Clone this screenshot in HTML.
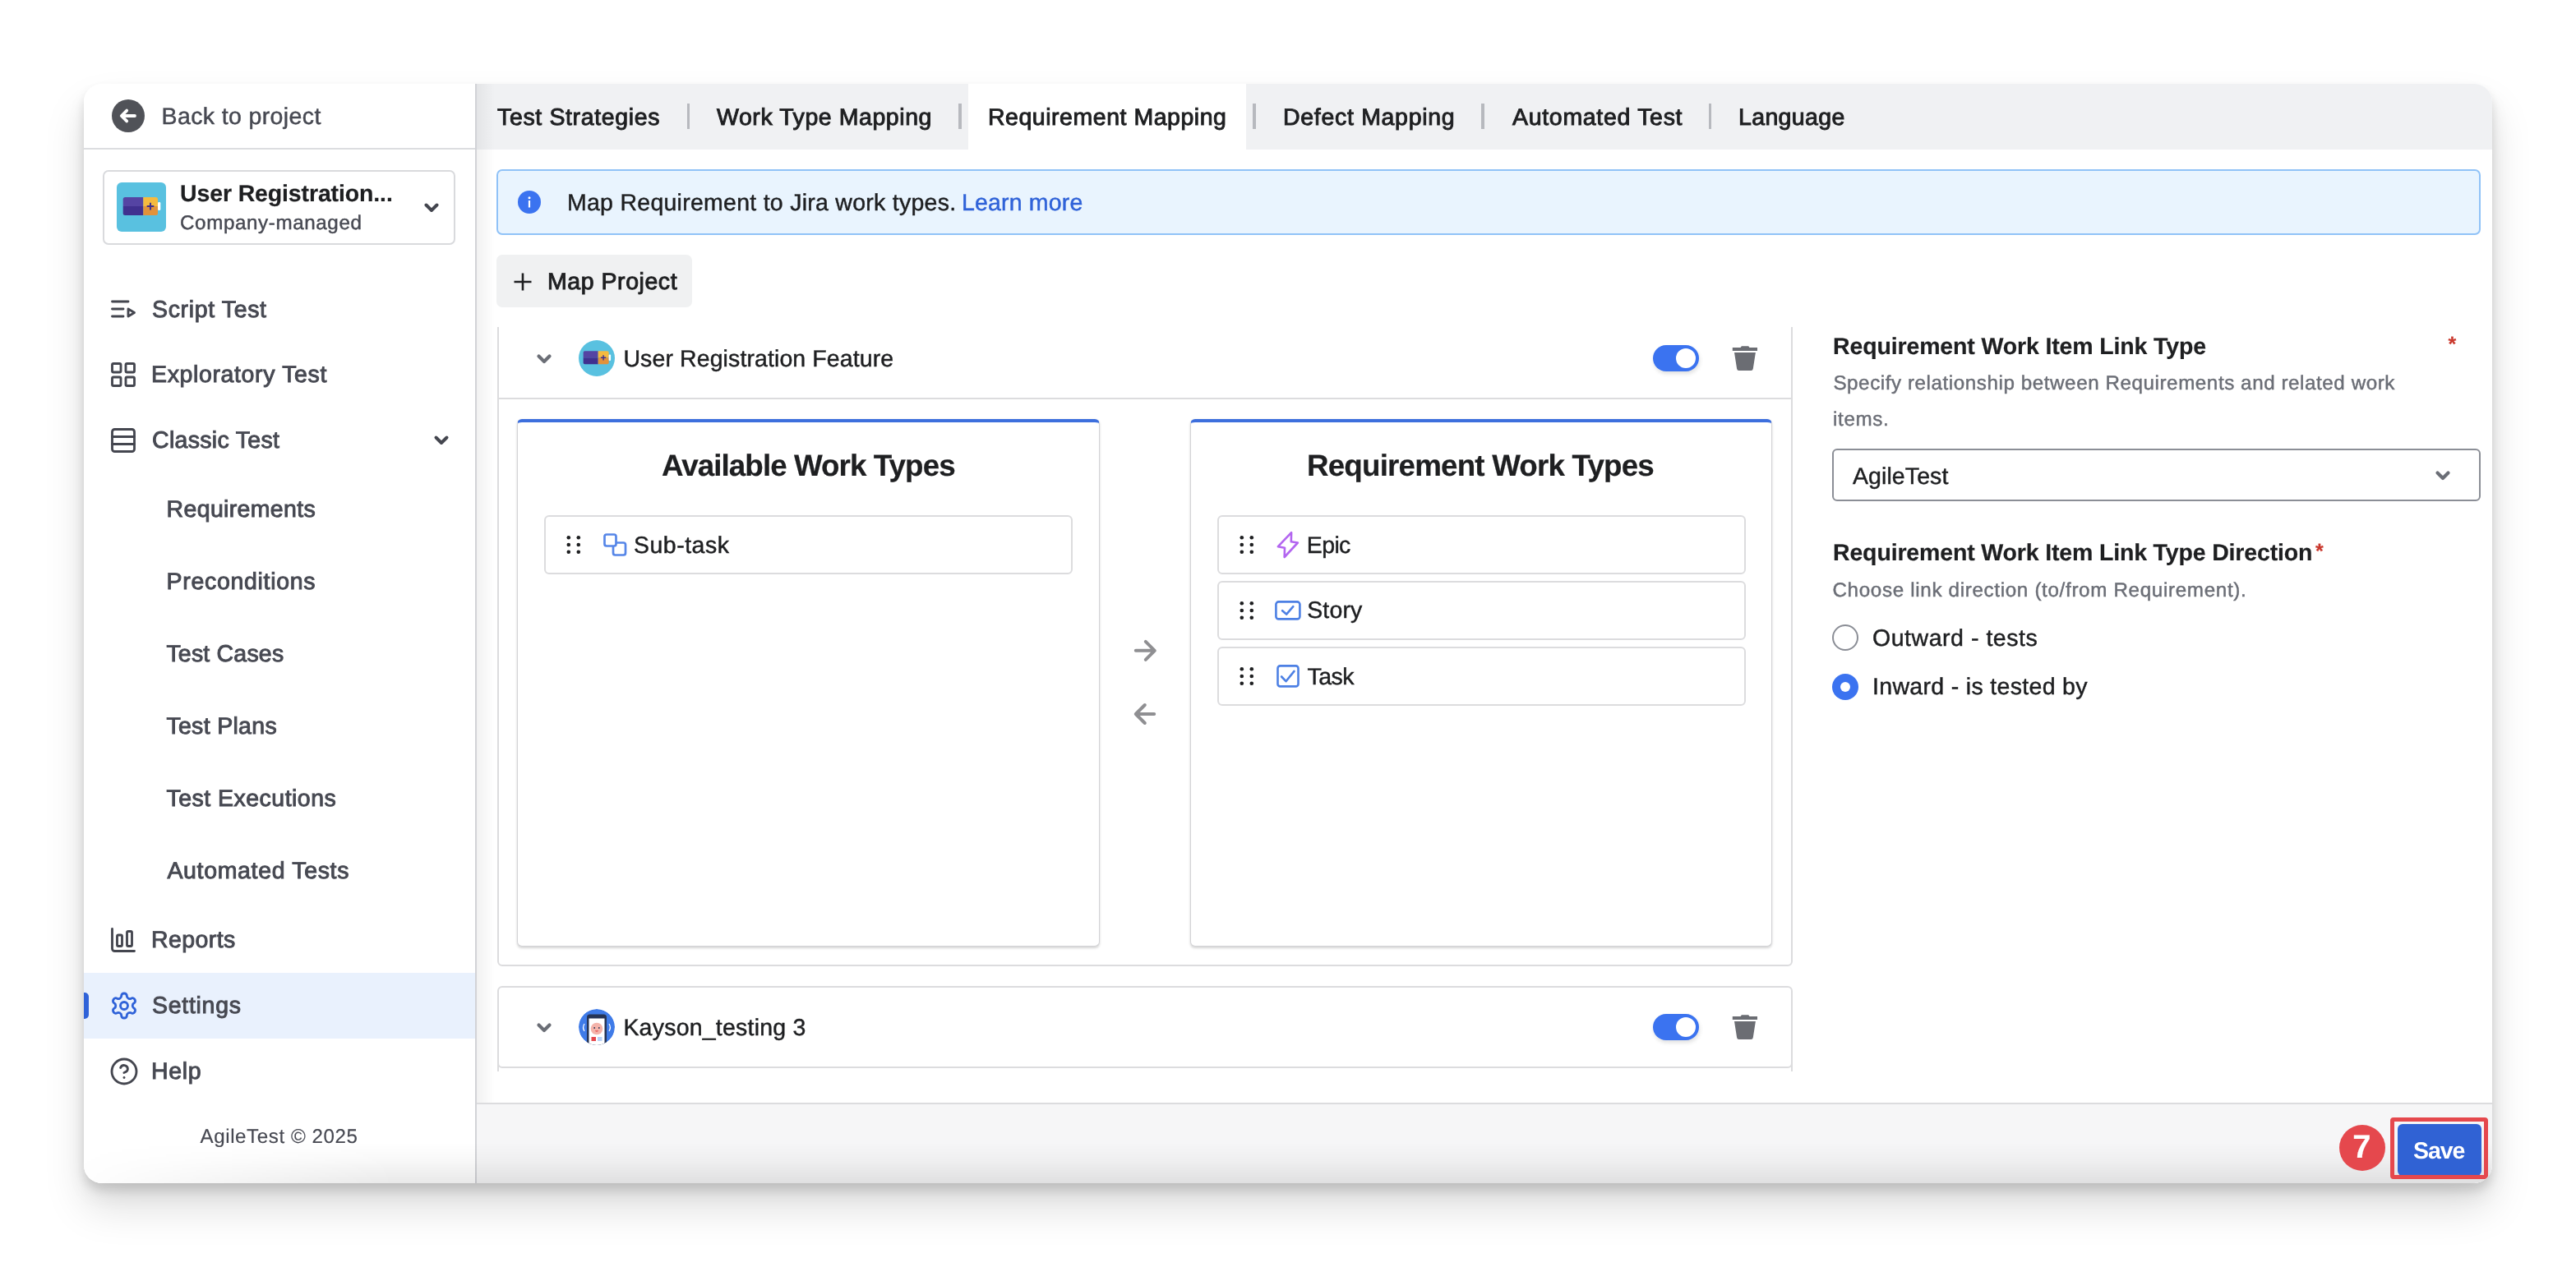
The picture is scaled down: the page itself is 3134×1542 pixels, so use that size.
<!DOCTYPE html>
<html lang="en">
<head>
<meta charset="utf-8">
<title>AgileTest Settings - Requirement Mapping</title>
<style>
*{box-sizing:border-box;margin:0;padding:0}
html,body{width:3134px;height:1542px;overflow:hidden;background:#fff}
body{font-family:"Liberation Sans",Arial,sans-serif;position:relative}
#shadow{position:absolute;left:102px;top:102px;width:2930px;height:1338px;border-radius:22px;background:#fff;
  box-shadow:0 8px 12px rgba(0,0,0,.11),0 30px 50px rgba(0,0,0,.13),0 14px 24px rgba(0,0,0,.06)}
#clip{position:absolute;left:102px;top:102px;width:2930px;height:1338px;border-radius:22px;overflow:hidden;background:#fff}
#in{position:absolute;left:-102px;top:-102px;width:3134px;height:1542px;will-change:transform}
#in div,#in svg{position:absolute}
.t{line-height:1;white-space:nowrap;text-rendering:geometricPrecision}
.bx{border:2px solid #dcdcde;border-radius:6px;background:#fff}
</style>
</head>
<body>
<div id="shadow"></div>
<div id="clip"><div id="in">
<!-- ===== sidebar ===== -->
<div style="left:102px;top:102px;width:478px;height:1338px;background:#fff;border-right:2px solid #d2d3d7"></div>
<div style="left:102px;top:179.5px;width:476px;height:2px;background:#dcdde0"></div>
<!-- back button -->
<svg style="left:136px;top:121px" width="40" height="40" viewBox="0 0 40 40"><circle cx="20" cy="20" r="20" fill="#505258"/><path d="M28 20H12.5M18.2 13.6L11.8 20L18.2 26.400" fill="none" stroke="#fff" stroke-width="3.800" stroke-linecap="round" stroke-linejoin="round"/></svg>
<!-- project box -->
<div class="bx" style="left:124.5px;top:206.5px;width:429px;height:91px;border-color:#d9dadd;border-radius:7px"></div>
<svg style="left:142px;top:222px" width="60" height="60" viewBox="0 0 60 60"><rect width="60" height="60" rx="6" fill="#59c1e0"/><path d="M10.2 18h22.100v11H7.700v-8.500a2.500 2.500 0 0 1 2.500-2.500z" fill="#5544a3"/><path d="M7.700 29h24.600v11H10.200a2.500 2.500 0 0 1-2.500-2.500z" fill="#40308f"/><path d="M32.300 18h15.200a2.500 2.500 0 0 1 2.500 2.500v8.500H32.300z" fill="#f5ba3f"/><path d="M32.300 29h17.700v8.500a2.500 2.500 0 0 1-2.500 2.500H32.300z" fill="#e2923a"/><rect x="50" y="23.900" width="3.300" height="10.200" rx="1.300" fill="#fff"/><path d="M41 24.800v8.600M36.700 29.100h8.600" stroke="#40308f" stroke-width="2" fill="none"/></svg>
<svg style="left:515px;top:244.5px" width="20" height="16" viewBox="0 0 20 16"><path d="M3.5 4.5L10 11L16.5 4.5" fill="none" stroke="#44464f" stroke-width="4" stroke-linecap="round" stroke-linejoin="round"/></svg>
<!-- nav icons -->
<svg style="left:132px;top:358px" width="36" height="36" viewBox="0 0 24 24" fill="none" stroke="#44464f" stroke-width="1.9" stroke-linecap="round" stroke-linejoin="round"><path d="M12 12H3"/><path d="M16 6H3"/><path d="M12 18H3"/><path d="m16 12 5 3-5 3v-6Z"/></svg>
<svg style="left:132px;top:438px" width="36" height="36" viewBox="0 0 24 24" fill="none" stroke="#44464f" stroke-width="1.9" stroke-linecap="round" stroke-linejoin="round"><rect width="7" height="7" x="3" y="3" rx="1"/><rect width="7" height="7" x="14" y="3" rx="1"/><rect width="7" height="7" x="14" y="14" rx="1"/><rect width="7" height="7" x="3" y="14" rx="1"/></svg>
<svg style="left:132px;top:518px" width="36" height="36" viewBox="0 0 24 24" fill="none" stroke="#44464f" stroke-width="1.9" stroke-linecap="round" stroke-linejoin="round"><rect width="18" height="18" x="3" y="3" rx="2"/><path d="M21 9H3"/><path d="M21 15H3"/></svg>
<svg style="left:527px;top:528px" width="20" height="16" viewBox="0 0 20 16"><path d="M3.5 4.5L10 11L16.5 4.5" fill="none" stroke="#44464f" stroke-width="4" stroke-linecap="round" stroke-linejoin="round"/></svg>
<svg style="left:132px;top:1126px" width="36" height="36" viewBox="0 0 24 24" fill="none" stroke="#44464f" stroke-width="1.9" stroke-linecap="round" stroke-linejoin="round"><path d="M3 3v16a2 2 0 0 0 2 2h16"/><rect x="15" y="5" width="4" height="12" rx="1"/><rect x="7" y="8" width="4" height="9" rx="1"/></svg>
<!-- settings active row -->
<div style="left:102px;top:1184px;width:476px;height:79.5px;background:#e9f1fd"></div>
<div style="left:102px;top:1208px;width:5.5px;height:31.5px;background:#2f62d8;border-radius:0 5px 5px 0"></div>
<svg style="left:132.5px;top:1206px" width="36" height="36" viewBox="0 0 24 24" fill="none" stroke="#2f62d8" stroke-width="1.9" stroke-linecap="round" stroke-linejoin="round"><path d="M12.22 2h-.44a2 2 0 0 0-2 2v.18a2 2 0 0 1-1 1.73l-.43.25a2 2 0 0 1-2 0l-.15-.08a2 2 0 0 0-2.73.73l-.22.38a2 2 0 0 0 .73 2.73l.15.1a2 2 0 0 1 1 1.72v.51a2 2 0 0 1-1 1.74l-.15.09a2 2 0 0 0-.73 2.73l.22.38a2 2 0 0 0 2.73.73l.15-.08a2 2 0 0 1 2 0l.43.25a2 2 0 0 1 1 1.73V20a2 2 0 0 0 2 2h.44a2 2 0 0 0 2-2v-.18a2 2 0 0 1 1-1.73l.43-.25a2 2 0 0 1 2 0l.15.08a2 2 0 0 0 2.73-.73l.22-.39a2 2 0 0 0-.73-2.73l-.15-.08a2 2 0 0 1-1-1.74v-.5a2 2 0 0 1 1-1.74l.15-.09a2 2 0 0 0 .73-2.73l-.22-.38a2 2 0 0 0-2.73-.73l-.15.08a2 2 0 0 1-2 0l-.43-.25a2 2 0 0 1-1-1.73V4a2 2 0 0 0-2-2z"/><circle cx="12" cy="12" r="3"/></svg>
<svg style="left:132.5px;top:1286px" width="36" height="36" viewBox="0 0 24 24" fill="none" stroke="#44464f" stroke-width="1.9" stroke-linecap="round" stroke-linejoin="round"><circle cx="12" cy="12" r="10"/><path d="M9.09 9a3 3 0 0 1 5.83 1c0 2-3 3-3 3"/><path d="M12 17h.01"/></svg>
<!-- ===== tab bar ===== -->
<div style="left:580px;top:102px;width:2452px;height:80px;background:#f0f1f3"></div>
<div style="left:1178px;top:102px;width:338px;height:80px;background:#fff"></div>
<div style="left:835.5px;top:126px;width:3.5px;height:31px;background:#b7b9be"></div>
<div style="left:1166.3px;top:126px;width:3.5px;height:31px;background:#b7b9be"></div>
<div style="left:1524.2px;top:126px;width:3.5px;height:31px;background:#b7b9be"></div>
<div style="left:1802px;top:126px;width:3.5px;height:31px;background:#b7b9be"></div>
<div style="left:2078.5px;top:126px;width:3.5px;height:31px;background:#b7b9be"></div>
<!-- sidebar shadow on content -->
<div style="left:580px;top:102px;width:22px;height:1338px;background:linear-gradient(90deg,rgba(0,0,0,.05),rgba(0,0,0,0))"></div>
<!-- banner -->
<div style="left:604px;top:206px;width:2414px;height:80px;background:#e9f4fe;border:2px solid #90c2f7;border-radius:7px"></div>
<svg style="left:630px;top:232px" width="28" height="28" viewBox="0 0 28 28"><circle cx="14" cy="14" r="14" fill="#3b73f0"/><rect x="12.9" y="12" width="2.2" height="8.5" fill="#fff"/><circle cx="14" cy="8.7" r="1.5" fill="#fff"/></svg>
<!-- map project -->
<div style="left:604px;top:310px;width:238px;height:64px;background:#f0f1f2;border-radius:7px"></div>
<svg style="left:624px;top:330.5px" width="24" height="24" viewBox="0 0 24 24"><path d="M12 1.5v21M1.5 12h21" stroke="#1e1f21" stroke-width="2.6" fill="none"/></svg>
<!-- ===== panels (scroll clip) ===== -->
<div style="left:603px;top:398px;width:1579px;height:906px;overflow:hidden"><div style="left:-603px;top:-398px;width:3134px;height:1542px">
<div class="bx" style="left:604.5px;top:380px;width:1576.5px;height:796.3px"></div>
<div style="left:606px;top:484px;width:1573px;height:2px;background:#dcdcde"></div>
<div class="bx" style="left:604.5px;top:1200.3px;width:1576.5px;height:99.7px"></div>
<div style="left:604.5px;top:1290px;width:2px;height:20px;background:#dcdcde"></div>
<div style="left:2179px;top:1290px;width:2px;height:20px;background:#dcdcde"></div>
<!-- cards -->
<div class="bx card" style="left:628.5px;top:510px;width:709.5px;height:641.7px"></div>
<div class="bx card" style="left:1447.5px;top:510px;width:708.5px;height:641.7px"></div>
<!-- items -->
<div class="bx" style="left:662px;top:627px;width:643px;height:71.5px"></div>
<div class="bx" style="left:1481px;top:627px;width:642.5px;height:71.5px"></div>
<div class="bx" style="left:1481px;top:707px;width:642.5px;height:71.5px"></div>
<div class="bx" style="left:1481px;top:787px;width:642.5px;height:71.5px"></div>
</div></div>
<style>.card{border-width:1.3px;border-color:#d3d3d6;border-top:4.5px solid #3d6fdd;box-shadow:0 1.5px 3px rgba(0,0,0,.17)}</style>
<!-- chevrons -->
<svg style="left:651.5px;top:428.5px" width="20" height="16" viewBox="0 0 20 16"><path d="M3.5 4.5L10 11L16.5 4.5" fill="none" stroke="#6b6e76" stroke-width="4.2" stroke-linecap="round" stroke-linejoin="round"/></svg>
<svg style="left:651.5px;top:1243px" width="20" height="16" viewBox="0 0 20 16"><path d="M3.5 4.5L10 11L16.5 4.5" fill="none" stroke="#6b6e76" stroke-width="4.2" stroke-linecap="round" stroke-linejoin="round"/></svg>
<!-- avatars -->
<svg style="left:704px;top:413.5px;border-radius:50%;overflow:hidden" width="44" height="44" viewBox="0 0 60 60"><g><rect width="60" height="60" fill="#59c1e0"/><path d="M10.200 18h22.100v11H7.700v-8.500a2.500 2.500 0 0 1 2.500-2.500z" fill="#5544a3"/><path d="M7.700 29h24.600v11H10.200a2.500 2.500 0 0 1-2.500-2.500z" fill="#40308f"/><path d="M32.300 18h15.200a2.500 2.500 0 0 1 2.500 2.500v8.500H32.300z" fill="#f5ba3f"/><path d="M32.300 29h17.700v8.500a2.500 2.500 0 0 1-2.500 2.500H32.300z" fill="#e2923a"/><rect x="50" y="23.900" width="3.300" height="10.200" rx="1.300" fill="#fff"/><path d="M41 24.800v8.600M36.700 29.100h8.600" stroke="#40308f" stroke-width="2" fill="none"/></g></svg>
<svg style="left:704px;top:1228px;border-radius:50%;overflow:hidden" width="44" height="44" viewBox="0 0 44 44"><circle cx="22" cy="22" r="22" fill="#3f7be8"/><g><rect x="10" y="6.5" width="24" height="44" rx="3.5" fill="#263455"/><rect x="12.5" y="11.5" width="19" height="36" fill="#fff"/><circle cx="22" cy="24" r="7.3" fill="#f4b3aa"/><circle cx="19.2" cy="23" r="0.9" fill="#263455"/><circle cx="24.8" cy="23" r="0.9" fill="#263455"/><path d="M19.8 26.3a2.4 2.4 0 0 0 4.4 0z" fill="#e5484d"/><rect x="15.5" y="34" width="5.5" height="5" fill="#e5484d"/><rect x="23" y="34" width="5.5" height="5" fill="#b9d2f7"/><path d="M6.8 18.5q-2.4 4 0 8M37.2 18.5q2.4 4 0 8" stroke="#fff" stroke-width="1.3" fill="none" stroke-linecap="round"/></g></svg>
<!-- toggles -->
<div class="tg" style="left:2010.5px;top:420px"></div><div class="kn" style="left:2038.8px;top:423.7px"></div>
<div class="tg" style="left:2010.5px;top:1234px"></div><div class="kn" style="left:2038.8px;top:1237.7px"></div>
<style>.tg{width:56.5px;height:31.5px;border-radius:16px;background:#3b73f0;box-shadow:1px 3px 5px rgba(0,0,0,.12)}.kn{width:24.5px;height:24.5px;border-radius:50%;background:#fff}</style>
<!-- trash -->
<svg style="left:2107px;top:421px" width="32" height="31" viewBox="0 0 32 31"><path d="M10.600 1.900l1.300-1.600h8.300l1.300 1.600H31v4.100H0.800V1.900z" fill="#6b6d73"/><path d="M3 8.100h25.900l-3.100 19.600a2.500 2.500 0 0 1-2.500 2.200H8.600a2.500 2.500 0 0 1-2.500-2.200z" fill="#6b6d73"/></svg>
<svg style="left:2107px;top:1235px" width="32" height="31" viewBox="0 0 32 31"><path d="M10.600 1.900l1.300-1.600h8.300l1.300 1.600H31v4.100H0.800V1.900z" fill="#6b6d73"/><path d="M3 8.100h25.900l-3.100 19.600a2.500 2.500 0 0 1-2.500 2.200H8.600a2.500 2.500 0 0 1-2.500-2.200z" fill="#6b6d73"/></svg>
<!-- drag dots -->
<svg style="left:688px;top:651px" width="20" height="24" viewBox="0 0 20 24" fill="#1e1f21"><circle cx="3.8" cy="3.3" r="2.3"/><circle cx="15.8" cy="3.3" r="2.3"/><circle cx="3.8" cy="12" r="2.3"/><circle cx="15.8" cy="12" r="2.3"/><circle cx="3.8" cy="20.700" r="2.3"/><circle cx="15.8" cy="20.700" r="2.3"/></svg>
<svg style="left:1507px;top:651px" width="20" height="24" viewBox="0 0 20 24" fill="#1e1f21"><circle cx="3.8" cy="3.3" r="2.3"/><circle cx="15.8" cy="3.3" r="2.3"/><circle cx="3.8" cy="12" r="2.3"/><circle cx="15.8" cy="12" r="2.3"/><circle cx="3.8" cy="20.700" r="2.3"/><circle cx="15.8" cy="20.700" r="2.3"/></svg>
<svg style="left:1507px;top:731px" width="20" height="24" viewBox="0 0 20 24" fill="#1e1f21"><circle cx="3.8" cy="3.3" r="2.3"/><circle cx="15.8" cy="3.3" r="2.3"/><circle cx="3.8" cy="12" r="2.3"/><circle cx="15.8" cy="12" r="2.3"/><circle cx="3.8" cy="20.700" r="2.3"/><circle cx="15.8" cy="20.700" r="2.3"/></svg>
<svg style="left:1507px;top:811px" width="20" height="24" viewBox="0 0 20 24" fill="#1e1f21"><circle cx="3.8" cy="3.3" r="2.3"/><circle cx="15.8" cy="3.3" r="2.3"/><circle cx="3.8" cy="12" r="2.3"/><circle cx="15.8" cy="12" r="2.3"/><circle cx="3.8" cy="20.700" r="2.3"/><circle cx="15.8" cy="20.700" r="2.3"/></svg>
<!-- type icons -->
<svg style="left:732.5px;top:648px" width="31" height="30" viewBox="0 0 31 30" fill="none" stroke="#5686e8" stroke-width="2.700" stroke-linejoin="round"><rect x="2.5" y="2.5" width="14" height="14" rx="2.5"/><path d="M16.5 12.5h9a2.5 2.500 0 0 1 2.500 2.500v10a2.500 2.500 0 0 1-2.500 2.500h-10a2.500 2.500 0 0 1-2.500-2.500v-8.500"/></svg>
<svg style="left:1552px;top:645px" width="30" height="36" viewBox="0 0 30 36" fill="none" stroke="#b366f0" stroke-width="2.600" stroke-linejoin="round" stroke-linecap="round"><path d="M19.100 3.100L18.800 14.300L26.900 15.500L10.700 33L11 21.800L2.900 20.200Z"/></svg>
<svg style="left:1550px;top:730px" width="34" height="26" viewBox="0 0 34 26" fill="none" stroke="#4d80e4" stroke-width="2.600" stroke-linejoin="round" stroke-linecap="round"><rect x="2.400" y="2.400" width="29" height="21" rx="3.200"/><path d="M10.100 13.200l5 4.400 8.200-9.400"/></svg>
<svg style="left:1552px;top:808px" width="30" height="30" viewBox="0 0 30 30" fill="none" stroke="#4d80e4" stroke-width="2.600" stroke-linejoin="round" stroke-linecap="round"><rect x="2.500" y="2.400" width="25" height="25" rx="3"/><path d="M7.100 15.500l5.400 5.700 10-12.300"/></svg>
<!-- arrows -->
<svg style="left:1376px;top:776px" width="34" height="32" viewBox="0 0 34 32" fill="none" stroke="#8f8f92" stroke-width="4" stroke-linecap="round" stroke-linejoin="round"><path d="M5.800 15.800h22M17.800 4.800L28.800 15.800 17.800 26.800"/></svg>
<svg style="left:1376px;top:853px" width="34" height="32" viewBox="0 0 34 32" fill="none" stroke="#8f8f92" stroke-width="4" stroke-linecap="round" stroke-linejoin="round"><path d="M28.200 16h-22M16.800 5L5.800 16 16.800 27"/></svg>
<!-- ===== right panel ===== -->
<div style="left:2229px;top:546px;width:788.5px;height:63.5px;border:2px solid #8b8e96;border-radius:6px;background:#fff"></div>
<svg style="left:2962.2px;top:571.3px" width="20" height="16" viewBox="0 0 20 16"><path d="M3.500 4.500L10 11L16.500 4.500" fill="none" stroke="#6b6e76" stroke-width="4.200" stroke-linecap="round" stroke-linejoin="round"/></svg>
<div style="left:2228.500px;top:759.500px;width:32px;height:32px;border-radius:50%;border:2px solid #8b8e96;background:#fff"></div>
<div style="left:2228.500px;top:819.500px;width:32px;height:32px;border-radius:50%;background:#3b73f0"></div>
<div style="left:2238.500px;top:829.500px;width:12px;height:12px;border-radius:50%;background:#fff"></div>
<!-- ===== footer ===== -->
<div style="left:580px;top:1342px;width:2452px;height:98px;background:#f6f6f7;border-top:2px solid #dcdcde"></div>


<!-- bottom inner gradient -->
<div style="left:102px;top:1390px;width:2930px;height:50px;background:linear-gradient(180deg,rgba(0,0,0,0),rgba(0,0,0,.025) 40%,rgba(0,0,0,.085));-webkit-mask-image:linear-gradient(90deg,rgba(0,0,0,.05),#000 380px);mask-image:linear-gradient(90deg,rgba(0,0,0,.05),#000 380px);pointer-events:none"></div>
<!-- save button + annotation -->
<div style="left:2846.2px;top:1368.7px;width:56px;height:56px;border-radius:50%;background:#e5484d"></div>
<div style="left:2916.7px;top:1368px;width:102.8px;height:62.5px;border-radius:6px;background:#3062d4"></div>
<div style="left:2908.3px;top:1360px;width:118.7px;height:75.3px;border:5px solid #e5484d;border-radius:4px"></div>

<div class="t" id="t0" style="left:196.60px;top:128px;font-size:28.5px;font-weight:400;color:#474952;letter-spacing:0.371px;-webkit-text-stroke:0.45px #474952;">Back to project</div>
<div class="t" id="t1" style="left:219.00px;top:222px;font-size:28.5px;font-weight:700;color:#1e1f21;letter-spacing:-0.132px;-webkit-text-stroke:0.2px #1e1f21;">User Registration...</div>
<div class="t" id="t2" style="left:219.00px;top:260px;font-size:24.2px;font-weight:400;color:#474952;letter-spacing:0.607px;-webkit-text-stroke:0.45px #474952;">Company-managed</div>
<div class="t" id="t3" style="left:185.00px;top:363px;font-size:28.5px;font-weight:400;color:#474952;letter-spacing:0.650px;-webkit-text-stroke:0.95px #474952;">Script Test</div>
<div class="t" id="t4" style="left:184.00px;top:442px;font-size:28.5px;font-weight:400;color:#474952;letter-spacing:0.633px;-webkit-text-stroke:0.95px #474952;">Exploratory Test</div>
<div class="t" id="t5" style="left:185.00px;top:522px;font-size:28.5px;font-weight:400;color:#474952;letter-spacing:0.318px;-webkit-text-stroke:0.95px #474952;">Classic Test</div>
<div class="t" id="t6" style="left:202.60px;top:606px;font-size:28.5px;font-weight:400;color:#474952;letter-spacing:0.336px;-webkit-text-stroke:0.95px #474952;">Requirements</div>
<div class="t" id="t7" style="left:202.60px;top:694px;font-size:28.5px;font-weight:400;color:#474952;letter-spacing:0.683px;-webkit-text-stroke:0.95px #474952;">Preconditions</div>
<div class="t" id="t8" style="left:202.40px;top:782px;font-size:28.5px;font-weight:400;color:#474952;letter-spacing:0.200px;-webkit-text-stroke:0.95px #474952;">Test Cases</div>
<div class="t" id="t9" style="left:202.40px;top:870px;font-size:28.5px;font-weight:400;color:#474952;letter-spacing:0.311px;-webkit-text-stroke:0.95px #474952;">Test Plans</div>
<div class="t" id="t10" style="left:202.40px;top:958px;font-size:28.5px;font-weight:400;color:#474952;letter-spacing:0.486px;-webkit-text-stroke:0.95px #474952;">Test Executions</div>
<div class="t" id="t11" style="left:203.40px;top:1046px;font-size:28.5px;font-weight:400;color:#474952;letter-spacing:0.664px;-webkit-text-stroke:0.95px #474952;">Automated Tests</div>
<div class="t" id="t12" style="left:184.00px;top:1130px;font-size:28.5px;font-weight:400;color:#474952;letter-spacing:0.417px;-webkit-text-stroke:0.95px #474952;">Reports</div>
<div class="t" id="t13" style="left:185.00px;top:1210px;font-size:28.5px;font-weight:400;color:#474952;letter-spacing:0.714px;-webkit-text-stroke:0.95px #474952;">Settings</div>
<div class="t" id="t14" style="left:184.00px;top:1290px;font-size:28.5px;font-weight:400;color:#474952;letter-spacing:0.667px;-webkit-text-stroke:0.95px #474952;">Help</div>
<div class="t" id="t15" style="left:243.60px;top:1372px;font-size:24.2px;font-weight:400;color:#474952;letter-spacing:0.547px;-webkit-text-stroke:0.15px #474952;">AgileTest © 2025</div>
<div class="t" id="t16" style="left:605.00px;top:129px;font-size:28.5px;font-weight:400;color:#1e1f21;letter-spacing:0.643px;-webkit-text-stroke:0.95px #1e1f21;">Test Strategies</div>
<div class="t" id="t17" style="left:872.00px;top:129px;font-size:28.5px;font-weight:400;color:#1e1f21;letter-spacing:0.562px;-webkit-text-stroke:0.95px #1e1f21;">Work Type Mapping</div>
<div class="t" id="t18" style="left:1202.00px;top:129px;font-size:28.5px;font-weight:400;color:#1e1f21;letter-spacing:0.528px;-webkit-text-stroke:0.95px #1e1f21;">Requirement Mapping</div>
<div class="t" id="t19" style="left:1561.00px;top:129px;font-size:28.5px;font-weight:400;color:#1e1f21;letter-spacing:0.692px;-webkit-text-stroke:0.95px #1e1f21;">Defect Mapping</div>
<div class="t" id="t20" style="left:1840.00px;top:129px;font-size:28.5px;font-weight:400;color:#1e1f21;letter-spacing:0.692px;-webkit-text-stroke:0.95px #1e1f21;">Automated Test</div>
<div class="t" id="t21" style="left:2115.00px;top:129px;font-size:28.5px;font-weight:400;color:#1e1f21;letter-spacing:0.357px;-webkit-text-stroke:0.95px #1e1f21;">Language</div>
<div class="t" id="t22" style="left:690.00px;top:233px;font-size:28.5px;font-weight:400;color:#1e1f21;letter-spacing:0.265px;-webkit-text-stroke:0.45px #1e1f21;">Map Requirement to Jira work types.</div>
<div class="t" id="t23" style="left:1170.00px;top:233px;font-size:28.5px;font-weight:400;color:#2f62d8;letter-spacing:0.167px;-webkit-text-stroke:0.45px #2f62d8;">Learn more</div>
<div class="t" id="t24" style="left:666.00px;top:329px;font-size:28.5px;font-weight:400;color:#1e1f21;letter-spacing:0.550px;-webkit-text-stroke:0.95px #1e1f21;">Map Project</div>
<div class="t" id="t25" style="left:758.40px;top:423px;font-size:28.5px;font-weight:400;color:#1e1f21;letter-spacing:0.104px;-webkit-text-stroke:0.45px #1e1f21;">User Registration Feature</div>
<div class="t" id="t26" style="left:805.00px;top:549px;font-size:36.8px;font-weight:700;color:#1e1f21;letter-spacing:-0.947px;-webkit-text-stroke:0.2px #1e1f21;">Available Work Types</div>
<div class="t" id="t27" style="left:1590.00px;top:549px;font-size:36.8px;font-weight:700;color:#1e1f21;letter-spacing:-0.833px;-webkit-text-stroke:0.2px #1e1f21;">Requirement Work Types</div>
<div class="t" id="t28" style="left:771.00px;top:650px;font-size:28.5px;font-weight:400;color:#1e1f21;letter-spacing:0.500px;-webkit-text-stroke:0.45px #1e1f21;">Sub-task</div>
<div class="t" id="t29" style="left:1589.80px;top:650px;font-size:28.5px;font-weight:400;color:#1e1f21;letter-spacing:-0.633px;-webkit-text-stroke:0.45px #1e1f21;">Epic</div>
<div class="t" id="t30" style="left:1590.20px;top:729px;font-size:28.5px;font-weight:400;color:#1e1f21;letter-spacing:0.150px;-webkit-text-stroke:0.45px #1e1f21;">Story</div>
<div class="t" id="t31" style="left:1590.40px;top:810px;font-size:28.5px;font-weight:400;color:#1e1f21;letter-spacing:-0.467px;-webkit-text-stroke:0.45px #1e1f21;">Task</div>
<div class="t" id="t32" style="left:758.40px;top:1237px;font-size:28.5px;font-weight:400;color:#1e1f21;letter-spacing:0.220px;-webkit-text-stroke:0.45px #1e1f21;">Kayson_testing 3</div>
<div class="t" id="t33" style="left:2230.00px;top:408px;font-size:28.5px;font-weight:700;color:#1e1f21;letter-spacing:-0.140px;-webkit-text-stroke:0.2px #1e1f21;">Requirement Work Item Link Type</div>
<div class="t" id="t34" style="left:2978.50px;top:407px;font-size:25px;font-weight:700;color:#c9372c;letter-spacing:0.000px;-webkit-text-stroke:0.2px #c9372c;">*</div>
<div class="t" id="t35" style="left:2230.40px;top:455px;font-size:24.2px;font-weight:400;color:#6b6e76;letter-spacing:0.567px;-webkit-text-stroke:0.45px #6b6e76;">Specify relationship between Requirements and related work</div>
<div class="t" id="t36" style="left:2230.00px;top:499px;font-size:24.2px;font-weight:400;color:#6b6e76;letter-spacing:0.660px;-webkit-text-stroke:0.45px #6b6e76;">items.</div>
<div class="t" id="t37" style="left:2254.00px;top:566px;font-size:28.5px;font-weight:400;color:#1e1f21;letter-spacing:0.087px;-webkit-text-stroke:0.45px #1e1f21;">AgileTest</div>
<div class="t" id="t38" style="left:2230.00px;top:659px;font-size:28.5px;font-weight:700;color:#1e1f21;letter-spacing:-0.155px;-webkit-text-stroke:0.2px #1e1f21;">Requirement Work Item Link Type Direction</div>
<div class="t" id="t39" style="left:2817.00px;top:659px;font-size:25px;font-weight:700;color:#c9372c;letter-spacing:0.000px;-webkit-text-stroke:0.2px #c9372c;">*</div>
<div class="t" id="t40" style="left:2229.40px;top:707px;font-size:24.2px;font-weight:400;color:#6b6e76;letter-spacing:0.670px;-webkit-text-stroke:0.45px #6b6e76;">Choose link direction (to/from Requirement).</div>
<div class="t" id="t41" style="left:2278.00px;top:763px;font-size:28.5px;font-weight:400;color:#1e1f21;letter-spacing:0.536px;-webkit-text-stroke:0.45px #1e1f21;">Outward - tests</div>
<div class="t" id="t42" style="left:2278.00px;top:822px;font-size:28.5px;font-weight:400;color:#1e1f21;letter-spacing:0.325px;-webkit-text-stroke:0.45px #1e1f21;">Inward - is tested by</div>
<div class="t" id="t43" style="left:2936.00px;top:1387px;font-size:28.5px;font-weight:700;color:#ffffff;letter-spacing:-1.100px;">Save</div>
<div class="t" id="t44" style="left:2862.20px;top:1376px;font-size:40px;font-weight:700;color:#ffffff;letter-spacing:0.000px;-webkit-text-stroke:0.2px #ffffff;">7</div>
</div></div>
</body>
</html>
